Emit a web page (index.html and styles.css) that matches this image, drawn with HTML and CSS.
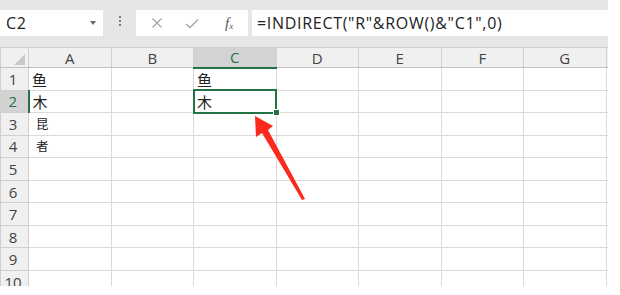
FILE: index.html
```html
<!DOCTYPE html>
<html lang="zh">
<head>
  <meta charset="UTF-8" />
  <title>INDIRECT</title>
  <link rel="stylesheet" href="styles.css">
</head>
<body>
  <div class="sheet">
    <div class="formula-bar">
      <div class="name-box">
        <span>C2</span>
        <span class="caret"></span>
      </div>
      <div class="grip">
        <span></span><span></span><span></span>
      </div>
      <div class="fx-buttons">
        <svg class="btn" width="12" height="12" viewBox="0 0 12 12">
          <path d="M1.5 1.5 L10.5 10.5 M10.5 1.5 L1.5 10.5" stroke="#a6a6a6" stroke-width="1.3" fill="none" />
        </svg>
        <svg class="btn" width="14" height="11" viewBox="0 0 14 11">
          <path d="M1 6 L5 9.5 L13 1.5" stroke="#a6a6a6" stroke-width="1.4" fill="none" />
        </svg>
        <span class="fx">f<sub>x</sub></span>
      </div>
      <div class="formula">=INDIRECT("R"&amp;ROW()&amp;"C1",0)</div>
    </div>

    <div class="grid-wrap">
      <table class="grid">
        <colgroup>
          <col class="c-head"><col class="c"><col class="c"><col class="c"><col class="c"><col class="c"><col class="c"><col class="c"><col class="c-end">
        </colgroup>
        <tr class="head">
          <th class="corner"><span class="corner-tri"></span></th>
          <th>A</th><th>B</th><th class="sel">C</th><th>D</th><th>E</th><th>F</th><th>G</th><th></th>
        </tr>
        <tr><th>1</th><td>鱼</td><td></td><td>鱼</td><td></td><td></td><td></td><td></td><td></td></tr>
        <tr><th class="sel">2</th><td>木</td><td></td><td class="active">木<span class="handle"></span></td><td></td><td></td><td></td><td></td><td></td></tr>
        <tr><th>3</th><td class="small">昆</td><td></td><td></td><td></td><td></td><td></td><td></td><td></td></tr>
        <tr><th>4</th><td class="small">者</td><td></td><td></td><td></td><td></td><td></td><td></td><td></td></tr>
        <tr><th>5</th><td></td><td></td><td></td><td></td><td></td><td></td><td></td><td></td></tr>
        <tr><th>6</th><td></td><td></td><td></td><td></td><td></td><td></td><td></td><td></td></tr>
        <tr><th>7</th><td></td><td></td><td></td><td></td><td></td><td></td><td></td><td></td></tr>
        <tr><th>8</th><td></td><td></td><td></td><td></td><td></td><td></td><td></td><td></td></tr>
        <tr><th>9</th><td></td><td></td><td></td><td></td><td></td><td></td><td></td><td></td></tr>
        <tr><th>10</th><td></td><td></td><td></td><td></td><td></td><td></td><td></td><td></td></tr>
      </table>
    </div>

    <!-- annotation arrow -->
    <svg class="arrow" width="620" height="295" viewBox="0 0 620 295">
      <polygon points="255,116 273,126 268,130 305,199 302,200 262,133 256,137" fill="#fb2a1c" />
    </svg>
  </div>
</body>
</html>
```

FILE: styles.css
```css
body {
  margin: 0;
  background: white;
  font-family: 'Open Sans', 'Noto Sans CJK SC', sans-serif;
}
.sheet {
  position: relative;
  width: 608px;
  height: 286px;
  overflow: hidden;
}
.formula-bar {
  height: 47px;
  background: #e6e6e6;
  display: flex;
  align-items: flex-start;
  padding-top: 10px;
  box-sizing: border-box;
}
.name-box, .fx-buttons, .formula {
  height: 26px;
  background: white;
  display: flex;
  align-items: center;
  box-sizing: border-box;
}
.name-box {
  width: 103px;
  padding-left: 6px;
  font-size: 16px;
  letter-spacing: 0.6px;
  color: #222;
  justify-content: space-between;
  padding-right: 7px;
}
.caret {
  width: 0;
  height: 0;
  border-left: 3.5px solid transparent;
  border-right: 3.5px solid transparent;
  border-top: 4px solid #6a6a6a;
}
.grip {
  width: 33px;
  display: flex;
  flex-direction: column;
  align-items: center;
  gap: 2px;
  padding-top: 6px;
}
.grip span {
  width: 2px;
  height: 2px;
  background: #7a7a7a;
}
.fx-buttons {
  width: 112px;
  padding-left: 15px;
  gap: 0;
}
.fx-buttons .btn {
  margin-right: 22px;
}
.fx-buttons .btn + .btn {
  margin-right: 26px;
}
.fx {
  font-family: 'Liberation Serif', serif;
  font-style: italic;
  font-size: 15px;
  color: #555;
}
.fx sub {
  font-size: 9px;
  vertical-align: -1px;
}
.formula {
  margin-left: 4px;
  flex: 1;
  padding-left: 5px;
  font-size: 16px;
  letter-spacing: 0.7px;
  color: #222;
}

.grid-wrap {
  height: 239px;
  overflow: hidden;
}
.grid {
  border-collapse: collapse;
  table-layout: fixed;
  width: 608px;
}
.c-head { width: 28px; }
.c { width: 82.5px; }
.c-end { width: 2.5px; }
.grid tr { height: 22.55px; }
.grid tr.head { height: 20px; }
.grid th, .grid td {
  padding: 0;
  border: 1px solid #dadada;
  overflow: hidden;
  white-space: nowrap;
}
.grid th {
  background: #f0f0f0;
  font-weight: normal;
  font-size: 15px;
  color: #444;
  border-color: #d0d0d0;
  line-height: 18px;
}
.grid tr th:first-child {
  text-align: center;
  padding-right: 3px;
}
.grid .head th {
  border-bottom-color: #c0c0c0;
}
.grid th.sel {
  background: #d3d3d3;
  color: #217346;
}
.grid .head th.sel {
  border-bottom: 2px solid #217346;
}
.grid tr th.sel:first-child {
  border-right: 2px solid #217346;
}
.corner {
  position: relative;
}
.corner-tri {
  position: absolute;
  right: 3px;
  bottom: 2px;
  width: 0;
  height: 0;
  border-left: 11px solid transparent;
  border-bottom: 11px solid #c8c8c8;
}
.grid td {
  font-size: 15px;
  color: #222;
  padding-left: 3px;
  vertical-align: bottom;
  line-height: 20px;
}
.grid td.small {
  font-size: 12.5px;
  padding-left: 7px;
}
.grid td.active {
  position: relative;
  overflow: visible;
  outline: 2px solid #217346;
  outline-offset: -1px;
}
.handle {
  position: absolute;
  right: -4px;
  bottom: -4px;
  width: 5px;
  height: 5px;
  background: #217346;
  border: 1px solid white;
  z-index: 1;
}
.arrow {
  position: absolute;
  left: 0;
  top: 0;
  pointer-events: none;
}
```
